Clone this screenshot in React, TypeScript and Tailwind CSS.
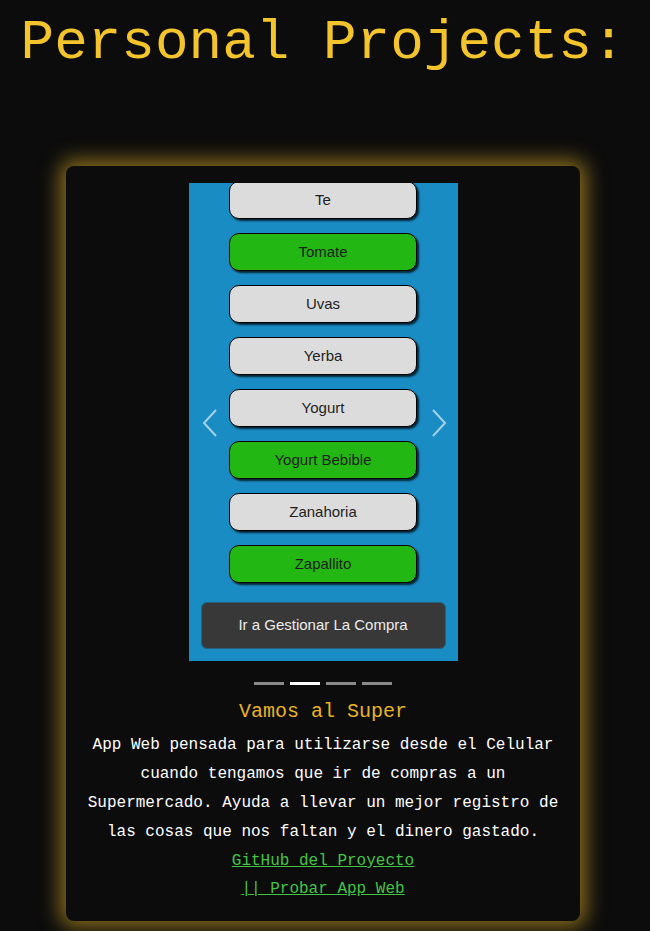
import React from "react";

const items: { name: string; green: boolean }[] = [
  { name: "Te", green: false },
  { name: "Tomate", green: true },
  { name: "Uvas", green: false },
  { name: "Yerba", green: false },
  { name: "Yogurt", green: false },
  { name: "Yogurt Bebible", green: true },
  { name: "Zanahoria", green: false },
  { name: "Zapallito", green: true },
];

export default function App() {
  return (
    <div className="min-h-[931px] w-full bg-[#0c0c0c] overflow-hidden pr-1" style={{ fontFamily: '"Liberation Mono", "Courier New", monospace' }}>
      <h1 className="mt-[11px] text-center text-[56px] leading-[64px] text-[#f3c42c] font-normal whitespace-nowrap">
        Personal Projects:
      </h1>
      <div className="flex justify-center mt-[91px]">
        <div className="w-[514px] rounded-lg bg-[#0c0c0c] shadow-[0_0_20px_6px_rgba(190,150,35,0.7)] pt-[17px] pb-[18px] px-5 flex flex-col items-center">
          <div className="relative w-[269px] h-[478px] bg-[#1a8cc4] overflow-hidden" style={{ fontFamily: '"Liberation Sans", Arial, sans-serif' }}>
            <div className="-mt-[2px] flex flex-col items-center gap-[14px]">
              {items.map((it) => (
                <div
                  key={it.name}
                  className={`w-[188px] h-[38px] rounded-[10px] border border-black flex items-center justify-center text-[15px] text-[#1e1e1e] shadow-[2px_2px_2px_rgba(0,0,0,0.75)] ${it.green ? "bg-[#22b712]" : "bg-[#dcdcdc]"}`}
                >
                  {it.name}
                </div>
              ))}
            </div>
            <div className="mt-[19px] mx-3 h-[47px] rounded-md bg-[#383838] border border-[#2c5f7e] flex items-center justify-center text-[15px] text-[#ececec]">
              Ir a Gestionar La Compra
            </div>
            <div className="absolute left-[13px] top-[226px]">
              <svg width="16" height="28" viewBox="0 0 16 28" fill="none">
                <path d="M14 1 L2 14 L14 27" stroke="rgba(255,255,255,0.6)" strokeWidth="2" />
              </svg>
            </div>
            <div className="absolute right-[11px] top-[226px]">
              <svg width="16" height="28" viewBox="0 0 16 28" fill="none">
                <path d="M2 1 L14 14 L2 27" stroke="rgba(255,255,255,0.6)" strokeWidth="2" />
              </svg>
            </div>
          </div>
          <div className="mt-[21px] flex gap-[6px]">
            <div className="w-[30px] h-[3px] bg-[#8a8a8a]" />
            <div className="w-[30px] h-[3px] bg-white" />
            <div className="w-[30px] h-[3px] bg-[#8a8a8a]" />
            <div className="w-[30px] h-[3px] bg-[#8a8a8a]" />
          </div>
          <h2 className="mt-[15px] text-[20px] leading-[24px] text-[#e8b425] font-normal">Vamos al Super</h2>
          <p className="mt-[7px] text-center text-[16px] leading-[29px] text-white">
            App Web pensada para utilizarse desde el Celular cuando tengamos que ir de compras a un Supermercado. Ayuda a llevar un mejor registro de las cosas que nos faltan y el dinero gastado.
          </p>
          <a href="#" className="text-[16px] leading-[28px] text-[#44c444] underline">GitHub del Proyecto</a>
          <a href="#" className="text-[16px] leading-[28px] text-[#44c444] underline whitespace-pre">|| Probar App Web</a>
        </div>
      </div>
    </div>
  );
}
